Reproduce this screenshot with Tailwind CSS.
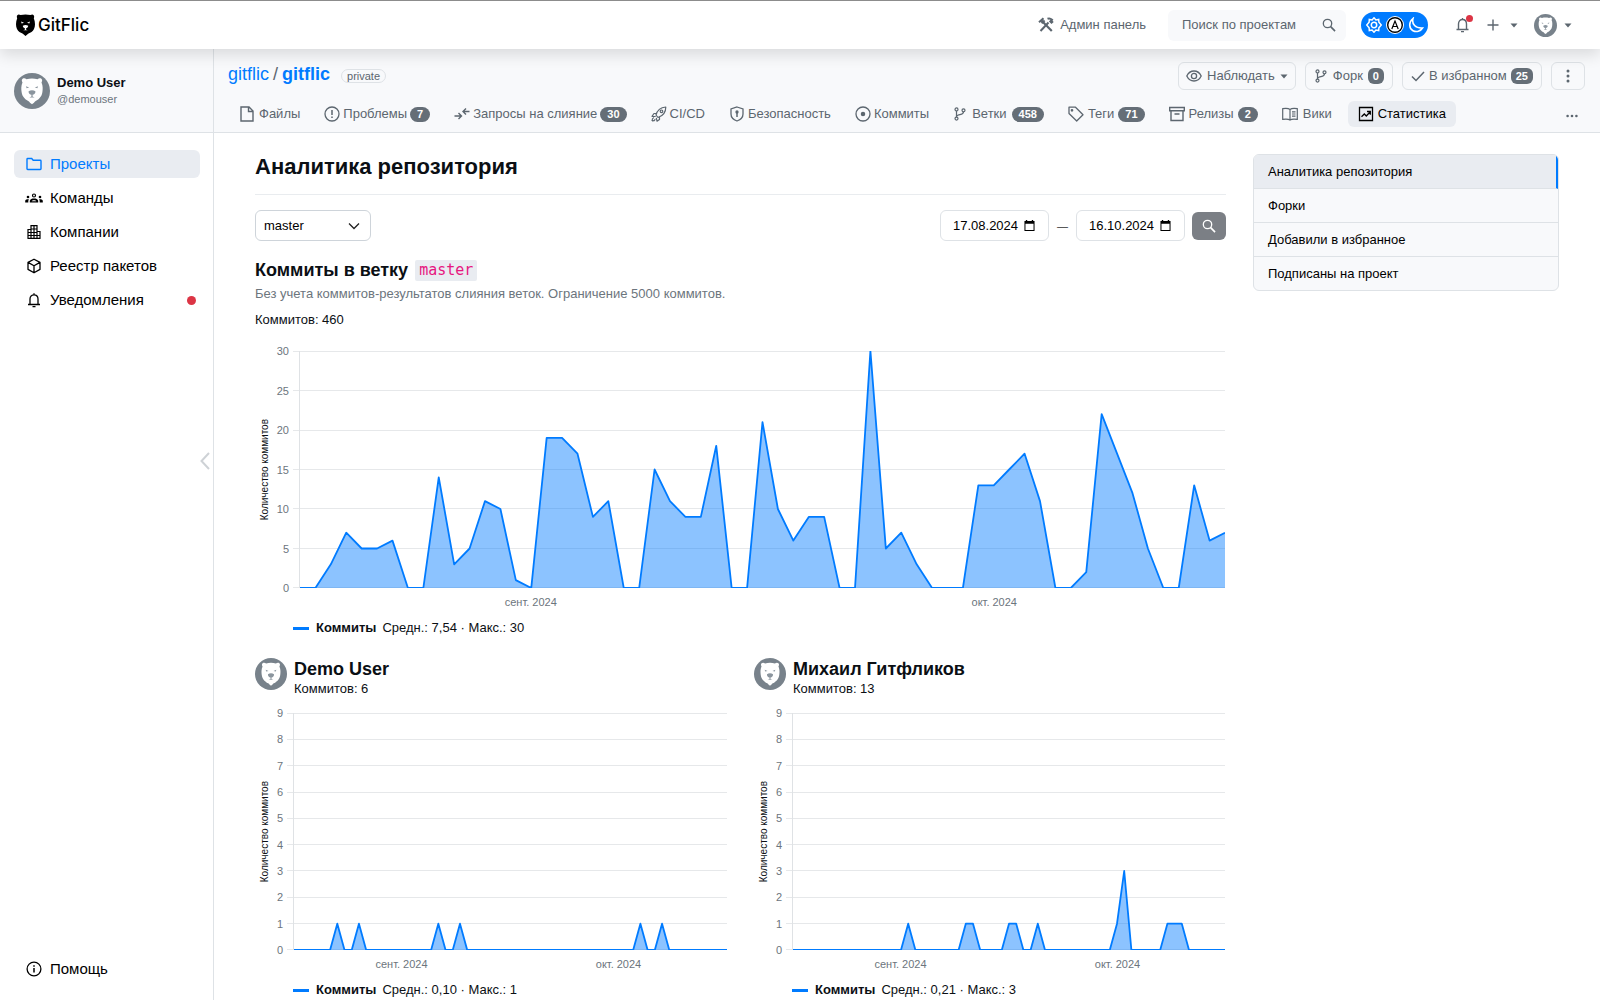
<!DOCTYPE html>
<html lang="ru">
<head>
<meta charset="utf-8">
<title>Статистика · gitflic/gitflic</title>
<meta name="viewport" content="width=device-width, initial-scale=1">
<script src="https://cdn.jsdelivr.net/npm/@tailwindcss/browser@4"></script>
</head>
<body class="bg-white font-['Liberation_Sans',Arial,sans-serif] text-[13px] leading-5 text-[#0b0f14]">

<!-- shared symbols -->
<svg class="hidden" aria-hidden="true">
  <symbol id="bear" viewBox="0 0 36 36">
    <circle cx="18" cy="18" r="18" fill="#78828b"/>
    <path fill="#fff" d="M8.500 9.500C6.500 6.500 9.500 4 12.500 6.200c3.500-1 7.500-1 11 0 3-2.200 6 .3 4 3.300 1.500 3.500 1.300 6.500.9 9.500-.5 5-4.400 8-7.400 9.500-.8 1-1.600 1.800-3 2.800-1.400-1-2.200-1.800-3-2.800-3-1.500-6.900-4.500-7.400-9.500-.4-3-.6-6 .9-9.500z"/>
    <path fill="#8b959e" d="M14.600 18.200c2-1.300 4.800-1.300 6.800 0 .3 2-1.400 3.400-2.800 3.600v1.700l2 1h-5.200l2-1v-1.700c-1.400-.2-3.100-1.600-2.800-3.600zM12 13.300l3.200 1.200-2.600.8zM24 13.300l-3.200 1.200 2.600.8z"/>
  </symbol>
  <symbol id="search" viewBox="0 0 16 16"><g fill="none" stroke="currentColor" stroke-width="1.500"><circle cx="6.300" cy="6.300" r="4.800"/><path d="M9.900 9.900l5 5" stroke-width="1.900"/></g></symbol>
  <symbol id="caret" viewBox="0 0 8 5"><path fill="currentColor" d="M.5.5h7L4 4.500z"/></symbol>
  <symbol id="branch" viewBox="0 0 16 16"><g fill="none" stroke="currentColor" stroke-width="1.400"><circle cx="4" cy="2.800" r="1.700"/><circle cx="4" cy="13.200" r="1.700"/><circle cx="12" cy="3.800" r="1.700"/><path d="M4 4.500v7M12 5.500C12 9 9 8.500 6.500 9 5 9.300 4 10 4 11.500"/></g></symbol>
  <symbol id="calendar" viewBox="0 0 12 12"><path fill="currentColor" fill-rule="evenodd" d="M2 0h1.500v1h5V0H10v1h1.500v11H.5V1H2zM1.600 4v7h8.800V4z"/></symbol>
</svg>

<header class="relative z-10 flex h-[49px] items-center border-t border-[#8c8c8c] bg-white pr-7 pl-4 shadow-[0_6px_14px_rgba(0,0,0,0.12)]">
  <a href="#" class="flex items-center gap-[3px] font-['Inter',sans-serif] text-[17px] leading-5 font-medium text-black">
    <svg class="h-[22px] w-[19px]" viewBox="0 0 19 22"><path d="M1.200 4.200C0 1.500 2-.8 4.600 1.100c3.200-.7 6.600-.7 9.800 0C17-.8 19 1.500 17.800 4.200c1.500 3.800 1.600 7.800.2 10.800-1.200 2.500-3.500 3.700-5.500 4.500L9.500 22l-3-2.500C4.500 18.700 2.200 17.500 1 15c-1.400-3-1.300-7 .2-10.800z"/><path fill="#fff" d="M5 7.600l3 1.100-2.300.7zM14 7.600l-3 1.100 2.300.7zM6.800 11.700c1.800-.8 3.600-.8 5.400 0 0 1.500-1.100 2.400-2.200 2.700v1.200l1.700.7H7.300l1.700-.7v-1.200c-1.100-.3-2.200-1.200-2.200-2.700z"/></svg>
    GitFlic
  </a>
  <a href="#" class="ml-auto flex items-center gap-1.5 text-[#5c666f]">
    <svg class="size-4" viewBox="0 0 16 16" fill="none" stroke="currentColor"><path d="M2.500 14L10.500 5.500M9.500 1.800c2-.8 3.300-.2 4.500 1l-1.700 1.700 1.200 1.200 1.500-1.500" stroke-width="2"/><path d="M3 3l10.800 11" stroke-width="2.200"/><path d="M1 5.300L5.500 1.200M3.600 6.300l3-2.800" stroke-width="2"/></svg>
    Админ панель
  </a>
  <label class="ml-[22px] flex h-[31px] w-[178px] items-center rounded-md bg-[#f8f9fb] pr-2.5 pl-3.5 text-[#5c666f]">
    <input type="text" aria-label="Поиск по проектам" placeholder="Поиск по проектам" class="w-full min-w-0 bg-transparent outline-none placeholder:text-[#5c666f]">
    <svg class="size-3.5 shrink-0"><use href="#search"/></svg>
  </label>
  <button type="button" aria-label="Тема оформления" class="ml-[15px] flex h-[26px] w-[67px] items-center justify-center gap-1 rounded-full bg-[#007bff] text-white">
    <svg class="size-4" viewBox="0 0 16 16" fill="none" stroke="currentColor" stroke-width="1.500"><path d="M8 .8l1.900 2.100 2.800-.5.200 2.800L15.300 8l-2.400 2.800-.2 2.800-2.800-.5L8 15.200l-1.900-2.100-2.800.5-.2-2.800L.7 8l2.400-2.800.2-2.800 2.800.5z"/><circle cx="8" cy="8" r="2.700"/></svg>
    <svg class="size-[18px]" viewBox="0 0 18 18"><circle cx="9" cy="9" r="9" fill="#fff"/><circle cx="9" cy="9" r="7.300" fill="#fff" stroke="#000" stroke-width="1.400"/><path d="M5.800 13L9 5l3.200 8M7 10.500h4" fill="none" stroke="#000" stroke-width="1.200"/></svg>
    <svg class="size-4" viewBox="0 0 16 16" fill="none" stroke="currentColor" stroke-width="1.600"><path d="M5 1.500C3.500 7 7.500 11.500 14.500 11 12.500 14.300 8.500 15.500 5 13.700 1 11.600.3 5.500 5 1.500z"/></svg>
  </button>
  <button type="button" aria-label="Уведомления" class="relative ml-[27px] text-[#5c666f]">
    <svg class="size-4" viewBox="0 0 16 16" fill="none" stroke="currentColor" stroke-width="1.400"><path d="M1.500 12.500h12M3.500 12V7c0-2.800 1.800-4.500 4-4.500s4 1.700 4 4.500v5M7.500 1v1.500M6 14.600h3"/></svg>
    <span class="absolute -top-0.5 -right-0.5 size-[7px] rounded-full bg-[#dc3545]"></span>
  </button>
  <button type="button" aria-label="Создать" class="ml-4 flex items-center gap-[11px] text-[#5c666f]">
    <svg class="size-3" viewBox="0 0 12 12" stroke="currentColor" stroke-width="1.400"><path d="M6 .5v11M.5 6h11"/></svg>
    <svg class="h-[5px] w-2"><use href="#caret"/></svg>
  </button>
  <button type="button" aria-label="Профиль" class="ml-4 flex items-center gap-[7px] text-[#5c666f]">
    <svg class="size-[23px]"><use href="#bear"/></svg>
    <svg class="h-[5px] w-2"><use href="#caret"/></svg>
  </button>
</header>

<div class="flex">
  <!-- sidebar -->
  <aside class="sticky top-0 flex h-[calc(100vh-49px)] w-[214px] shrink-0 flex-col border-r border-[#dee2e6]">
    <div class="flex h-[84px] items-center gap-[7px] border-b border-[#dee2e6] bg-[#f8f9fb] px-3.5">
      <svg class="size-9"><use href="#bear"/></svg>
      <div class="leading-[17px]">
        <div class="font-bold">Demo User</div>
        <div class="text-[11px] text-[#6c757d]">@demouser</div>
      </div>
    </div>
    <nav class="flex flex-1 flex-col gap-1.5 pt-[17px] pr-[13px] pb-[17px] pl-3.5 text-[15px] text-black">
      <a href="#" class="flex h-7 items-center gap-2 rounded-md bg-[#e9ecf1] px-3 text-[#007bff]">
        <svg class="size-4" viewBox="0 0 16 16" fill="none" stroke="currentColor" stroke-width="1.400"><path d="M1 3.200c0-.5.300-.7.700-.7h4l1.500 1.700h7c.5 0 .8.300.8.700v7.900c0 .5-.3.700-.7.700H1.700c-.4 0-.7-.3-.7-.7z"/></svg>Проекты</a>
      <a href="#" class="flex h-7 items-center gap-2 px-3">
        <svg class="size-4 overflow-visible" viewBox="0 0 16 16" fill="currentColor"><circle cx="8" cy="5.500" r="1.500" fill="none" stroke="currentColor" stroke-width="1.200"/><circle cx="2" cy="7" r="1.300"/><circle cx="14" cy="7" r="1.300"/><path d="M3.800 12.500v-1.700C4.200 9.200 6 8.600 8 8.600s3.800.6 4.200 2.200v1.700zM-.8 12.500v-1.700C-.5 9.500 1.200 9.200 3 9.300c-.6.700-.7 1.500-.7 3.200zM16.800 12.500v-1.700c-.3-1.300-2-1.600-3.800-1.500.6.700.7 1.500.7 3.200z"/><path d="M5.800 11.300c.4-1.400 4-1.400 4.400 0z" fill="#fff"/></svg>Команды</a>
      <a href="#" class="flex h-7 items-center gap-2 px-3">
        <svg class="size-4" viewBox="0 0 16 16" fill="none" stroke="currentColor" stroke-width="1.200"><path d="M2 14.500V5.500h3V1.700h6v5.800h3v7M5 5.500v9M8 1.700v12.800M11 7.500v7M1.500 14.400h13M2 8.500h9M2 11.500h12M5 5h6"/></svg>Компании</a>
      <a href="#" class="flex h-7 items-center gap-2 px-3">
        <svg class="size-4" viewBox="0 0 16 16" fill="none" stroke="currentColor" stroke-width="1.300" stroke-linejoin="round"><path d="M8 1.200l6 3.200v7L8 14.800l-6-3.400v-7zM2 4.400l6 3.400 6-3.400M8 7.800v7"/></svg>Реестр пакетов</a>
      <a href="#" class="flex h-7 items-center gap-2 pr-1 pl-3">
        <svg class="size-4" viewBox="0 0 16 16" fill="none" stroke="currentColor" stroke-width="1.300"><path d="M2 12.500h12M4 12V7c0-2.500 1.800-4.200 4-4.200s4 1.700 4 4.200v5M8 1.200v1.600M6.500 14.600h3"/></svg>Уведомления<span class="ml-auto size-[9px] rounded-full bg-[#dc3545]"></span></a>
      <a href="#" class="mt-auto flex h-7 items-center gap-2 px-3">
        <svg class="size-4" viewBox="0 0 16 16" fill="none" stroke="currentColor" stroke-width="1.300"><circle cx="8" cy="8" r="6.900"/><path d="M8 7v4.500M8 4.300v1.400" stroke-width="1.500"/></svg>Помощь</a>
    </nav>
    <button type="button" aria-label="Свернуть меню" class="absolute top-[403px] right-[3px] text-[#ced2d6]">
      <svg class="h-[18px] w-2.5" viewBox="0 0 10 18" fill="none" stroke="currentColor" stroke-width="2"><path d="M9 1L1.500 9 9 17"/></svg>
    </button>
  </aside>

  <div class="min-w-0 flex-1">
    <!-- project bar -->
    <div class="flex h-[84px] flex-col border-b border-[#dee2e6] bg-[#f8f9fb] pr-[15px] pl-3.5">
      <div class="mt-[13px] flex h-7 items-center gap-[9px] text-[#5c666f]">
        <div class="mb-1 flex items-center text-lg leading-5">
          <a href="#" class="text-[#007bff]">gitflic</a><span class="mx-1">/</span><a href="#" class="font-bold text-[#007bff]">gitflic</a>
          <span class="mt-1 ml-[11px] rounded-full border border-[#dee2e6] px-[5px] text-[11px] leading-3">private</span>
        </div>
        <button type="button" class="ml-auto flex h-7 items-center gap-[5px] rounded-md border border-[#dee2e6] px-[7px]">
          <svg class="h-3.5 w-4" viewBox="0 0 16 14" fill="none" stroke="currentColor" stroke-width="1.300"><path d="M.8 7C2.500 3.500 5 2 8 2s5.500 1.500 7.200 5C13.500 10.500 11 12 8 12S2.500 10.500.8 7z"/><circle cx="8" cy="7" r="2.600"/></svg>
          Наблюдать
          <svg class="h-[5px] w-2"><use href="#caret"/></svg>
        </button>
        <button type="button" class="flex h-7 items-center gap-[5px] rounded-md border border-[#dee2e6] px-2">
          <svg class="size-3.5"><use href="#branch"/></svg>
          Форк <span class="rounded-md bg-[#656e77] px-[5px] text-[11px] leading-4 font-bold text-white">0</span>
        </button>
        <button type="button" class="flex h-7 items-center gap-1 rounded-md border border-[#dee2e6] px-2">
          <svg class="size-3.5" viewBox="0 0 14 14" fill="none" stroke="currentColor" stroke-width="1.500"><path d="M1 7.500l4 4L13 3"/></svg>
          В избранном <span class="rounded-md bg-[#656e77] px-[5px] text-[11px] leading-4 font-bold text-white">25</span>
        </button>
        <button type="button" aria-label="Ещё" class="flex h-7 w-[34px] items-center justify-center rounded-md border border-[#dee2e6]">
          <svg class="h-3.5 w-1" viewBox="0 0 4 14" fill="currentColor"><circle cx="2" cy="2" r="1.500"/><circle cx="2" cy="7" r="1.500"/><circle cx="2" cy="12" r="1.500"/></svg>
        </button>
      </div>
      <nav class="mt-[11px] flex h-[26px] items-center whitespace-nowrap text-[#5c666f]">
        <a href="#" class="flex items-center gap-1 pr-3 pl-[11px]"><svg class="size-4" viewBox="0 0 16 16" fill="none" stroke="currentColor" stroke-width="1.400"><path d="M2 1h8l4 4v10H2zM9.500 1v4.500H14"/></svg>Файлы</a>
        <a href="#" class="flex items-center gap-[3px] px-3"><svg class="size-4" viewBox="0 0 16 16" fill="none" stroke="currentColor" stroke-width="1.300"><circle cx="8" cy="8" r="7"/><path d="M8 4v5M8 10.500V12" stroke-width="1.500"/></svg>Проблемы <span class="rounded-full bg-[#656e77] px-[7px] text-[11px] leading-[15px] font-bold text-white">7</span></a>
        <a href="#" class="flex items-center gap-[3px] px-3"><svg class="size-4" viewBox="0 0 16 16" fill="none" stroke="currentColor" stroke-width="1.400"><path d="M.5 10H7M4.500 7L7.500 10l-3 3M15.500 5.500H9.500M12 2.500L9 5.500l3 3"/></svg>Запросы на слияние <span class="rounded-full bg-[#656e77] px-[7px] text-[11px] leading-[15px] font-bold text-white">30</span></a>
        <a href="#" class="flex items-center gap-[3px] px-3"><svg class="size-4" viewBox="0 0 16 16" fill="none" stroke="currentColor" stroke-width="1.200" stroke-linejoin="round"><path d="M5 9c1-4 4-7.500 9.800-8 0 5.500-3 9-7.800 10.500zM5.500 7.500H3L1 10.300l3.700.2M8.500 11v2.500L6 15.200l-.7-3.400M1 15c0-2 .5-3 2-3.500M1 15c2 0 2.800-.5 3.300-1.800"/><circle cx="10.500" cy="5.300" r="1.300"/></svg>CI/CD</a>
        <a href="#" class="flex items-center gap-[3px] px-3"><svg class="size-4" viewBox="0 0 16 16" fill="none" stroke="currentColor" stroke-width="1.300"><path d="M8 1l6 2v5c0 3.500-2.500 5.800-6 7-3.500-1.200-6-3.500-6-7V3z"/><path d="M8 6v5" stroke-width="1.500"/><circle cx="8" cy="6" r="1" fill="currentColor"/></svg>Безопасность</a>
        <a href="#" class="flex items-center gap-[3px] px-3"><svg class="size-4" viewBox="0 0 16 16" fill="none" stroke="currentColor" stroke-width="1.300"><circle cx="8" cy="8" r="7"/><circle cx="8" cy="8" r="1.600" fill="currentColor"/></svg>Коммиты</a>
        <a href="#" class="flex items-center gap-[5px] px-3"><svg class="size-3.5"><use href="#branch"/></svg>Ветки <span class="rounded-full bg-[#656e77] px-[7px] text-[11px] leading-[15px] font-bold text-white">458</span></a>
        <a href="#" class="flex items-center gap-1 px-3"><svg class="size-4" viewBox="0 0 16 16" fill="none" stroke="currentColor" stroke-width="1.300" stroke-linejoin="round"><path d="M1 1.200h6.500L15 8.700 8.700 15 1 7.500z"/><circle cx="4" cy="4.300" r=".7"/></svg>Теги <span class="rounded-full bg-[#656e77] px-[7px] text-[11px] leading-[15px] font-bold text-white">71</span></a>
        <a href="#" class="flex items-center gap-1 px-3"><svg class="size-4" viewBox="0 0 16 16" fill="none" stroke="currentColor" stroke-width="1.400"><path d="M.7 1.500h14.600v3.300H.7zM2 5v9.500h12V5M5.500 8h5"/></svg>Релизы <span class="rounded-full bg-[#656e77] px-[7px] text-[11px] leading-[15px] font-bold text-white">2</span></a>
        <a href="#" class="flex items-center gap-[5px] px-3"><svg class="size-4" viewBox="0 0 16 16" fill="none" stroke="currentColor" stroke-width="1.200"><path d="M8 3.500C6.500 2.300 3.500 2.300.7 2.700v10.600c2.800-.4 5.800-.4 7.300.7 1.500-1.100 4.500-1.100 7.300-.7V2.700C12.500 2.300 9.500 2.300 8 3.500zM8 3.500V14M10 5.800h3.500M10 8h3.500M10 10.200h3.500"/></svg>Вики</a>
        <a href="#" class="ml-1 flex h-[26px] items-center gap-1 rounded-md bg-[#e9ecf1] px-2.5 text-black"><svg class="size-4" viewBox="0 0 16 16" fill="none" stroke="currentColor" stroke-width="1.300"><path d="M1.500 1.500h13v13h-13zM3.500 10.800L6.300 8l2 2 3.700-4M9 5.500h3.300v3.300"/></svg>Статистика</a>
        <button type="button" aria-label="Ещё разделы" class="mt-1 mr-[7px] ml-auto"><svg class="h-1 w-3" viewBox="0 0 12 4" fill="currentColor"><circle cx="1.600" cy="2" r="1.300"/><circle cx="6" cy="2" r="1.300"/><circle cx="10.400" cy="2" r="1.300"/></svg></button>
      </nav>
    </div>

    <div class="flex items-start gap-[27px] pt-[21px] pr-[41px] pl-[41px]">
      <main class="min-w-0 flex-1">
        <h1 class="border-b border-[#e9ecef] pb-[14px] text-[22px] leading-[26px] font-bold">Аналитика репозитория</h1>
        <form class="mt-[15px] flex items-center">
          <div class="grid w-[116px] items-center">
            <select aria-label="Ветка" class="col-start-1 row-start-1 h-[31px] w-full appearance-none rounded-md border border-[#ced4da] bg-white px-2 text-black"><option>master</option></select>
            <svg class="pointer-events-none col-start-1 row-start-1 mr-[11px] h-2 w-3 justify-self-end" viewBox="0 0 12 8" fill="none" stroke="#222" stroke-width="1.300"><path d="M1 1.500l5 5 5-5"/></svg>
          </div>
          <label class="ml-auto flex h-[31px] w-[109px] items-center rounded-md border border-[#dee2e6] px-3 text-black"><input type="text" aria-label="Дата начала" value="17.08.2024" class="w-[71px] min-w-0 outline-none"><svg class="size-[11px] shrink-0"><use href="#calendar"/></svg></label>
          <span class="w-[27px] text-center text-[11px] text-[#333]">—</span>
          <label class="flex h-[31px] w-[109px] items-center rounded-md border border-[#dee2e6] px-3 text-black"><input type="text" aria-label="Дата конца" value="16.10.2024" class="w-[71px] min-w-0 outline-none"><svg class="size-[11px] shrink-0"><use href="#calendar"/></svg></label>
          <button type="submit" aria-label="Найти" class="ml-[7px] flex h-7 w-[34px] items-center justify-center rounded-md bg-[#7b7f85] text-white"><svg class="size-3.5"><use href="#search"/></svg></button>
        </form>

        <h2 class="mt-[18px] flex items-center gap-[7px] text-lg leading-[22px] font-bold">Коммиты в ветку <code class="rounded-xs bg-[#e9ecf1] px-1 font-['DejaVu_Sans_Mono',monospace] text-[15px] leading-[21px] font-normal text-[#e6177f]">master</code></h2>
        <p class="mt-[3px] text-[#6c757d]">Без учета коммитов-результатов слияния веток. Ограничение 5000 коммитов.</p>
        <p class="mt-1.5">Коммитов: 460</p>

        <section class="mt-[21px]" aria-label="Все коммиты">
          <div class="flex h-[237px]">
            <div class="flex w-5 items-center justify-center"><span class="rotate-180 text-[10px] leading-3 [writing-mode:vertical-rl]">Количество коммитов</span></div>
            <div class="flex w-[14px] flex-col justify-between text-right text-[11px] leading-3 text-[#6c757d]">
              <span class="-my-1.5">30</span><span class="-my-1.5">25</span><span class="-my-1.5">20</span><span class="-my-1.5">15</span><span class="-my-1.5">10</span><span class="-my-1.5">5</span><span class="-my-1.5">0</span>
            </div>
            <div class="ml-1 grid flex-1 pr-px">
              <div class="col-start-1 row-start-1 flex flex-col justify-between">
                <i class="h-px bg-[#e6e8ea]"></i><i class="h-px bg-[#e6e8ea]"></i><i class="h-px bg-[#e6e8ea]"></i><i class="h-px bg-[#e6e8ea]"></i><i class="h-px bg-[#e6e8ea]"></i><i class="h-px bg-[#e6e8ea]"></i><i class="h-px bg-[#e6e8ea]"></i>
              </div>
              <svg class="col-start-1 row-start-1 ml-1.5 h-full w-[calc(100%-6px)] border-l border-[#dfe2e5]" viewBox="0 0 60 30" preserveAspectRatio="none" data-values="0 0 3 7 5 5 6 0 0 14 3 5 11 10 1 0 19 19 17 9 11 0 0 15 11 9 9 18 0 0 21 10 6 9 9 0 0 30 5 7 3 0 0 0 13 13 15 17 11 0 0 2 22 17 12 5 0 0 13 6 7"></svg>
            </div>
          </div>
          <div class="mt-2 ml-11 grid grid-cols-2 text-[11px] leading-3 text-[#6c757d]">
            <span class="text-center">сент. 2024</span><span class="text-center">окт. 2024</span>
          </div>
          <p class="mt-2.5 ml-[38px] flex items-center leading-5"><i class="mr-[7px] h-[3px] w-4 bg-[#007bff]"></i><b class="mr-1.5">Коммиты</b>Средн.: 7,54 · Макс.: 30</p>
        </section>

        <div class="mt-5 grid grid-cols-2 gap-x-[27px]">
          <section>
            <div class="flex items-start gap-[7px]">
              <svg class="size-8"><use href="#bear"/></svg>
              <div><h3 class="text-lg leading-[22px] font-bold">Demo User</h3><p class="leading-[18px]">Коммитов: 6</p></div>
            </div>
            <div class="mt-[15px] flex h-[237px]">
              <div class="flex w-5 items-center justify-center"><span class="rotate-180 text-[10px] leading-3 [writing-mode:vertical-rl]">Количество коммитов</span></div>
              <div class="flex w-2 flex-col justify-between text-right text-[11px] leading-3 text-[#6c757d]">
                <span class="-my-1.5">9</span><span class="-my-1.5">8</span><span class="-my-1.5">7</span><span class="-my-1.5">6</span><span class="-my-1.5">5</span><span class="-my-1.5">4</span><span class="-my-1.5">3</span><span class="-my-1.5">2</span><span class="-my-1.5">1</span><span class="-my-1.5">0</span>
              </div>
              <div class="ml-1 grid flex-1">
                <div class="col-start-1 row-start-1 flex flex-col justify-between">
                  <i class="h-px bg-[#e6e8ea]"></i><i class="h-px bg-[#e6e8ea]"></i><i class="h-px bg-[#e6e8ea]"></i><i class="h-px bg-[#e6e8ea]"></i><i class="h-px bg-[#e6e8ea]"></i><i class="h-px bg-[#e6e8ea]"></i><i class="h-px bg-[#e6e8ea]"></i><i class="h-px bg-[#e6e8ea]"></i><i class="h-px bg-[#e6e8ea]"></i><i class="h-px bg-[#e6e8ea]"></i>
                </div>
                <svg class="col-start-1 row-start-1 ml-1.5 h-full w-[calc(100%-6px)] border-l border-[#dfe2e5]" viewBox="0 0 60 9" preserveAspectRatio="none" data-values="0 0 0 0 0 0 1 0 0 1 0 0 0 0 0 0 0 0 0 0 1 0 0 1 0 0 0 0 0 0 0 0 0 0 0 0 0 0 0 0 0 0 0 0 0 0 0 0 1 0 0 1 0 0 0 0 0 0 0 0 0"></svg>
              </div>
            </div>
            <div class="mt-2 ml-[38px] grid grid-cols-2 text-[11px] leading-3 text-[#6c757d]">
              <span class="text-center">сент. 2024</span><span class="text-center">окт. 2024</span>
            </div>
            <p class="mt-2.5 ml-[38px] flex items-center leading-5"><i class="mr-[7px] h-[3px] w-4 bg-[#007bff]"></i><b class="mr-1.5">Коммиты</b>Средн.: 0,10 · Макс.: 1</p>
          </section>
          <section>
            <div class="flex items-start gap-[7px]">
              <svg class="size-8"><use href="#bear"/></svg>
              <div><h3 class="text-lg leading-[22px] font-bold">Михаил Гитфликов</h3><p class="leading-[18px]">Коммитов: 13</p></div>
            </div>
            <div class="mt-[15px] flex h-[237px]">
              <div class="flex w-5 items-center justify-center"><span class="rotate-180 text-[10px] leading-3 [writing-mode:vertical-rl]">Количество коммитов</span></div>
              <div class="flex w-2 flex-col justify-between text-right text-[11px] leading-3 text-[#6c757d]">
                <span class="-my-1.5">9</span><span class="-my-1.5">8</span><span class="-my-1.5">7</span><span class="-my-1.5">6</span><span class="-my-1.5">5</span><span class="-my-1.5">4</span><span class="-my-1.5">3</span><span class="-my-1.5">2</span><span class="-my-1.5">1</span><span class="-my-1.5">0</span>
              </div>
              <div class="ml-1 grid flex-1 pr-px">
                <div class="col-start-1 row-start-1 flex flex-col justify-between">
                  <i class="h-px bg-[#e6e8ea]"></i><i class="h-px bg-[#e6e8ea]"></i><i class="h-px bg-[#e6e8ea]"></i><i class="h-px bg-[#e6e8ea]"></i><i class="h-px bg-[#e6e8ea]"></i><i class="h-px bg-[#e6e8ea]"></i><i class="h-px bg-[#e6e8ea]"></i><i class="h-px bg-[#e6e8ea]"></i><i class="h-px bg-[#e6e8ea]"></i><i class="h-px bg-[#e6e8ea]"></i>
                </div>
                <svg class="col-start-1 row-start-1 ml-1.5 h-full w-[calc(100%-6px)] border-l border-[#dfe2e5]" viewBox="0 0 60 9" preserveAspectRatio="none" data-values="0 0 0 0 0 0 0 0 0 0 0 0 0 0 0 0 1 0 0 0 0 0 0 0 1 1 0 0 0 0 1 1 0 0 1 0 0 0 0 0 0 0 0 0 0 1 3 0 0 0 0 0 1 1 1 0 0 0 0 0 0"></svg>
              </div>
            </div>
            <div class="mt-2 ml-[38px] grid grid-cols-2 text-[11px] leading-3 text-[#6c757d]">
              <span class="text-center">сент. 2024</span><span class="text-center">окт. 2024</span>
            </div>
            <p class="mt-2.5 ml-[38px] flex items-center leading-5"><i class="mr-[7px] h-[3px] w-4 bg-[#007bff]"></i><b class="mr-1.5">Коммиты</b>Средн.: 0,21 · Макс.: 3</p>
          </section>
        </div>
      </main>

      <nav class="w-[306px] shrink-0 divide-y divide-[#dee2e6] overflow-hidden rounded-md border border-[#dee2e6] bg-[#f8f9fb] text-black">
        <a href="#" class="block border-r-2 border-r-[#007bff] bg-[#e9ecf1] px-3.5 leading-[33px]">Аналитика репозитория</a>
        <a href="#" class="block px-3.5 leading-[33px]">Форки</a>
        <a href="#" class="block px-3.5 leading-[33px]">Добавили в избранное</a>
        <a href="#" class="block px-3.5 leading-[33px]">Подписаны на проект</a>
      </nav>
    </div>
  </div>
</div>

<script>
  // Draws each commit series (one value per day) as a filled area with a line on top.
  document.querySelectorAll('svg[data-values]').forEach(function (svg) {
    var max = svg.viewBox.baseVal.height;
    var line = svg.dataset.values.split(' ').map(function (v, i) { return i + ',' + (max - v); }).join(' ');
    var end = svg.viewBox.baseVal.width;
    svg.innerHTML =
      '<polygon fill="#007bff" fill-opacity=".45" points="0,' + max + ' ' + line + ' ' + end + ',' + max + '"/>' +
      '<polyline fill="none" stroke="#007bff" stroke-width="1.8" stroke-linejoin="round" vector-effect="non-scaling-stroke" points="' + line + '"/>';
  });
</script>
</body>
</html>
